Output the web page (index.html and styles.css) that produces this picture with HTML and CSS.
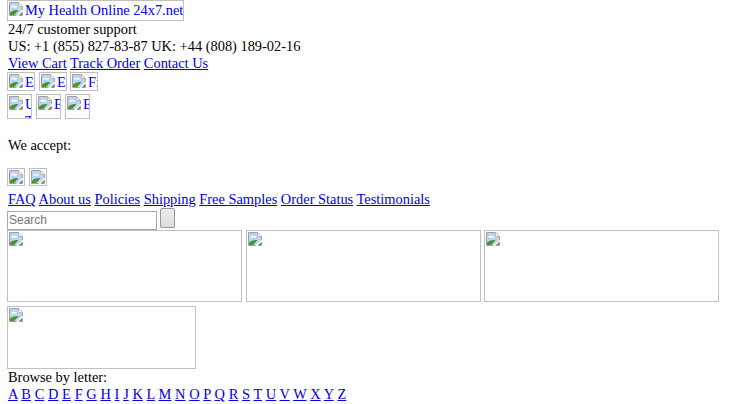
FILE: index.html
```html
<!DOCTYPE html>
<html>
<head>
<meta charset="UTF-8">
<title>My Health Online 24x7.net</title>
<link rel="stylesheet" href="styles.css">
</head>
<body>

	<svg class="defs" width="0" height="0">
		<symbol id="noimg" viewBox="0 0 16 16">
			<path d="M0.5 0.5H9.5L13.5 4.5V13.5H0.5Z" fill="#bcd3f4" stroke="#a0a0a0"/>
			<path d="M9.5 0.5V4.5H13.5Z" fill="#fff" stroke="#b8b8b8"/>
			<path d="M2 5.5C2.6 3.9 4.6 3.4 5.7 4.3C6.8 3.8 8 4.4 8.2 5.5Z" fill="#fff"/>
			<path d="M1 13V10.8C3 8.8 6 7.8 9.4 8.2L5.2 13Z" fill="#47982a"/>
			<path d="M14 7.4L7 14H9.2L14 9.4Z" fill="#fff"/>
			<path d="M10 13L13 10.2V13Z" fill="#6f9460"/>
		</symbol>
	</svg>

	<a class="pic logo" href="#"><svg class="ico"><use href="#noimg"/></svg><span>My Health Online 24x7.net</span></a>

	<div class="line">24/7 customer support</div>
	<div class="line">US: +1 (855) 827-83-87 UK: +44 (808) 189-02-16</div>
	<div class="line">
		<a href="#">View Cart</a>
		<a href="#">Track Order</a>
		<a href="#">Contact Us</a>
	</div>

	<div class="flags">
		<a class="pic flag" href="#"><svg class="ico"><use href="#noimg"/></svg><span>En</span></a>
		<a class="pic flag" href="#"><svg class="ico"><use href="#noimg"/></svg><span>Es</span></a>
		<a class="pic flag flag3" href="#"><svg class="ico"><use href="#noimg"/></svg><span>Fr</span></a>
	</div>
	<div class="flags">
		<a class="pic cur" href="#"><svg class="ico"><use href="#noimg"/></svg><span>U<br>T</span></a>
		<a class="pic cur" href="#"><svg class="ico"><use href="#noimg"/></svg><span>E</span></a>
		<a class="pic cur" href="#"><svg class="ico"><use href="#noimg"/></svg><span>E</span></a>
	</div>

	<p class="line accept">We accept:</p>
	<div class="cards">
		<span class="pic card"><svg class="ico"><use href="#noimg"/></svg></span>
		<span class="pic card"><svg class="ico"><use href="#noimg"/></svg></span>
	</div>

	<div class="line">
		<a href="#">FAQ</a>
		<a href="#">About us</a>
		<a href="#">Policies</a>
		<a href="#">Shipping</a>
		<a href="#">Free Samples</a>
		<a href="#">Order Status</a>
		<a href="#">Testimonials</a>
	</div>

	<form class="search">
		<input type="text" class="txt" placeholder="Search">
		<button type="button" class="btn"></button>
	</form>

	<div class="banners">
		<span class="pic banner"><svg class="ico"><use href="#noimg"/></svg></span>
		<span class="pic banner"><svg class="ico"><use href="#noimg"/></svg></span>
		<span class="pic banner"><svg class="ico"><use href="#noimg"/></svg></span>
	</div>
	<span class="pic small"><svg class="ico"><use href="#noimg"/></svg></span>

	<div class="line">Browse by letter:</div>
	<div class="line letters">
		<a href="#">A</a>
		<a href="#">B</a>
		<a href="#">C</a>
		<a href="#">D</a>
		<a href="#">E</a>
		<a href="#">F</a>
		<a href="#">G</a>
		<a href="#">H</a>
		<a href="#">I</a>
		<a href="#">J</a>
		<a href="#">K</a>
		<a href="#">L</a>
		<a href="#">M</a>
		<a href="#">N</a>
		<a href="#">O</a>
		<a href="#">P</a>
		<a href="#">Q</a>
		<a href="#">R</a>
		<a href="#">S</a>
		<a href="#">T</a>
		<a href="#">U</a>
		<a href="#">V</a>
		<a href="#">W</a>
		<a href="#">X</a>
		<a href="#">Y</a>
		<a href="#">Z</a>
	</div>

</body>
</html>
```

FILE: styles.css
```css
body {
	margin: 0 0 0 7px;
	font-family: "Liberation Serif", serif;
	font-size: 14.4px;
	line-height: 17px;
	color: #000;
}

a {
	color: #0000ee;
}

.defs {
	display: block;
	height: 0;
}

.line {
	padding-left: 1px;
}

.letters {
	word-spacing: 0.12px;
}

/* box of a picture that did not load */
.pic {
	display: flex;
	box-sizing: border-box;
	border: 1px solid #c0c0c0;
	padding: 1px;
	overflow: hidden;
	text-decoration: none;
}

.ico {
	flex: none;
	width: 16px;
	height: 16px;
}

.logo {
	width: 177px;
	height: 21px;
	white-space: nowrap;
}

.flags {
	display: flex;
	margin-bottom: 3px;
}

.flag {
	width: 28px;
	height: 19px;
	margin-right: 4px;
}

.flag3 {
	margin-left: -1px;
}

.cur {
	width: 25px;
	height: 25px;
	margin-right: 4px;
}

.accept {
	margin: 18px 0 15px;
}

.cards {
	display: flex;
	gap: 4px;
	margin-top: -1px;
	margin-bottom: 5px;
}

.card {
	width: 18px;
	height: 18px;
}

.search {
	display: flex;
	align-items: flex-start;
	height: 22px;
}

.txt {
	box-sizing: border-box;
	width: 150px;
	height: 20px;
	margin: 3px 3px 0 0;
	border: 1px solid #a9a9a9;
	border-bottom-width: 2px;
	padding: 0 1px 1px;
	font-family: "Liberation Sans", sans-serif;
	font-size: 12px;
}

.btn {
	box-sizing: border-box;
	width: 15px;
	height: 20px;
	padding: 0;
	border: 1px solid #999;
	border-radius: 2px;
	background: linear-gradient(#ececec, #dedede);
}

.banners {
	display: flex;
	gap: 4px;
	margin-bottom: 4px;
}

.banner {
	width: 235px;
	height: 72px;
}

.banner + .banner + .banner {
	margin-left: -1px;
}

.small {
	width: 189px;
	height: 63px;
}
```
